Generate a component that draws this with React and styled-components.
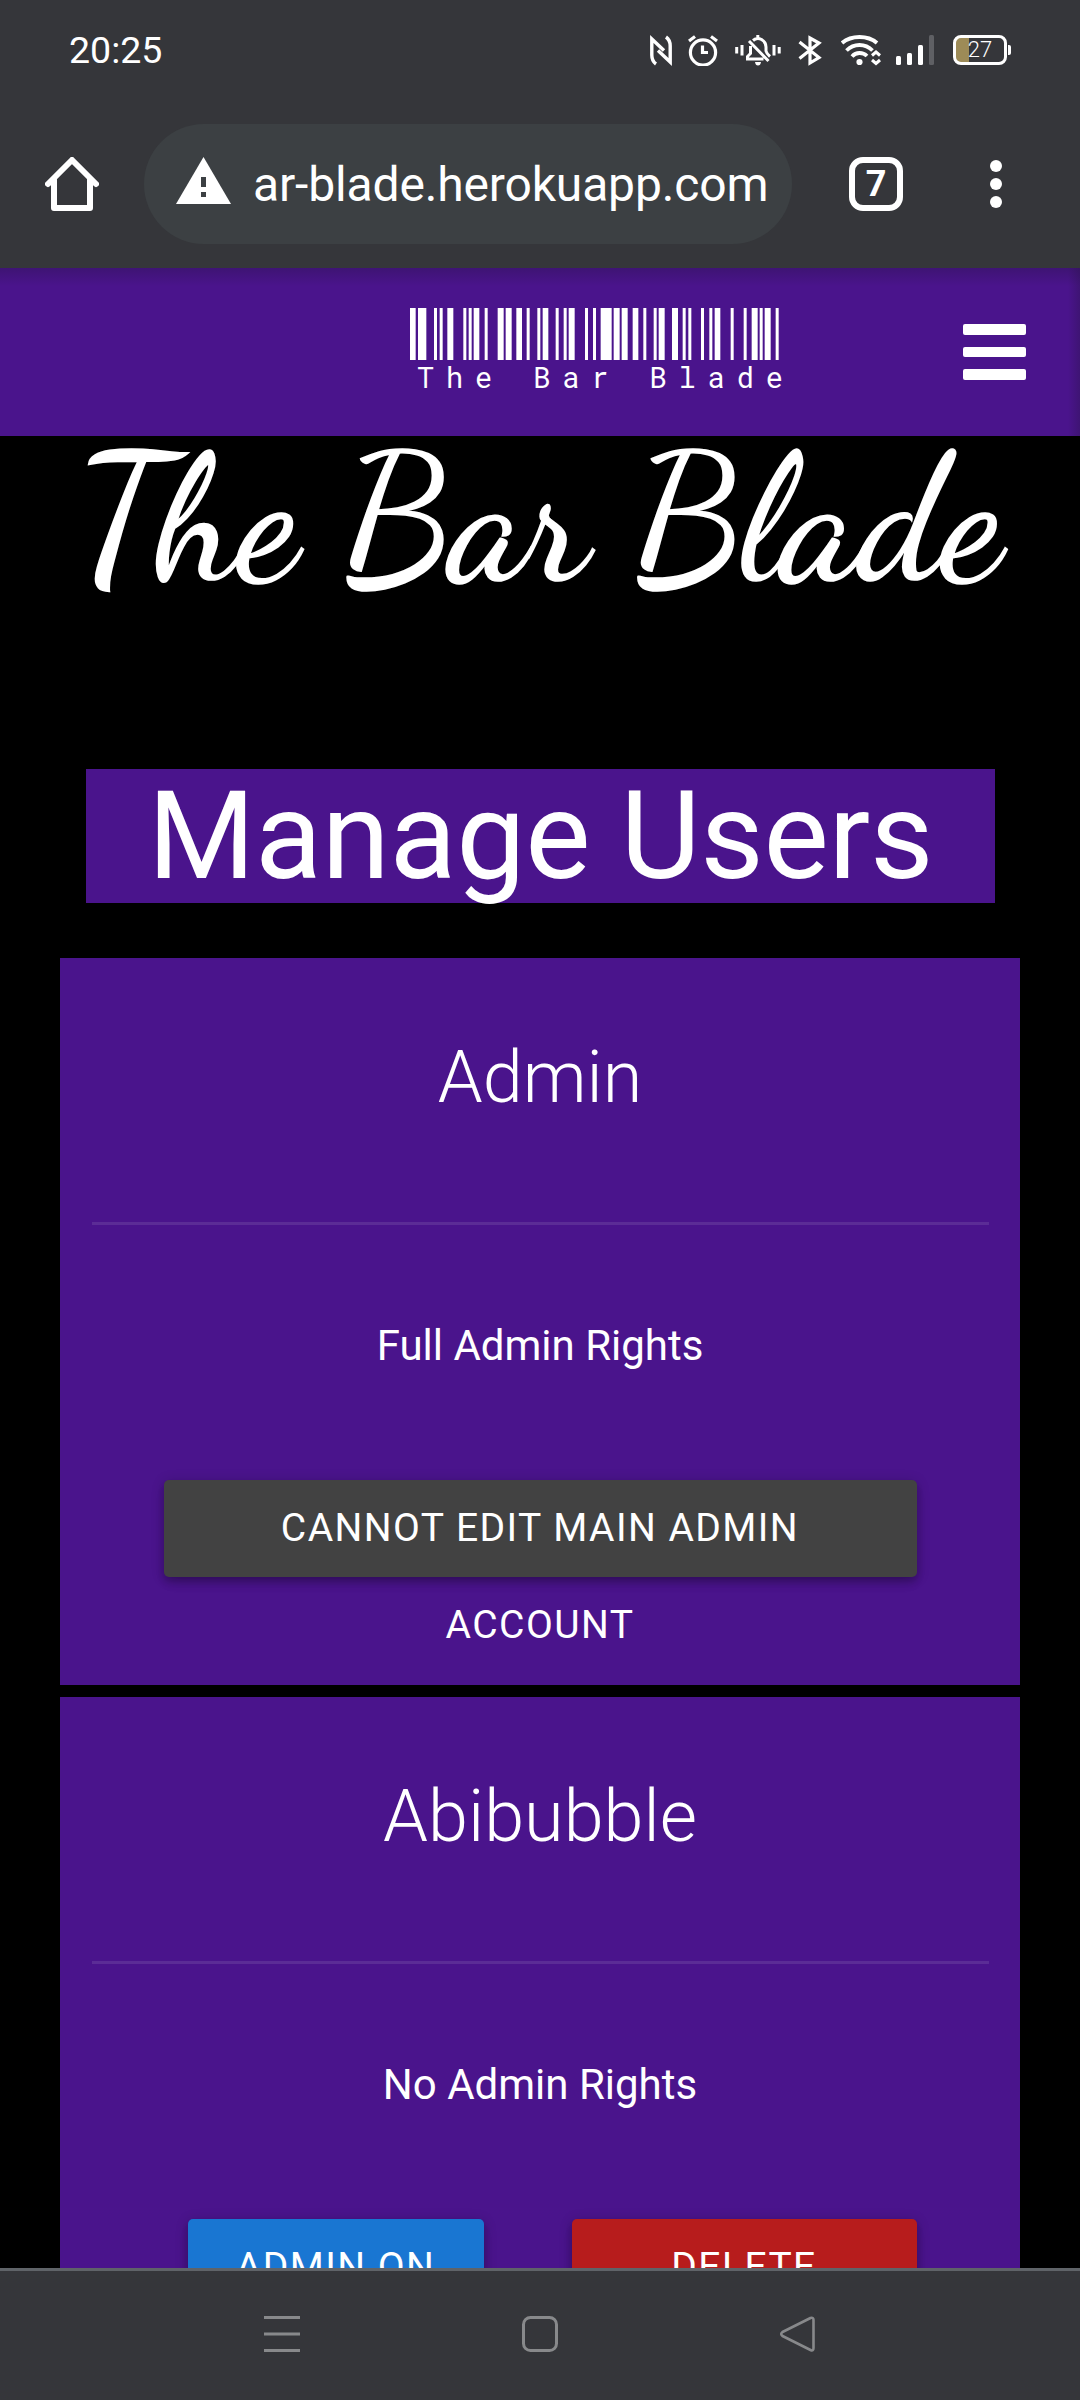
import React from "react";
import styled, { createGlobalStyle } from "styled-components";

const GlobalStyle = createGlobalStyle`
  *, *::before, *::after { box-sizing: border-box; }
  body { margin: 0; background: #000; }
  h1, h2, p { margin: 0; font-weight: 400; }
  svg { display: block; flex: none; }
  button { border: 0; padding: 0; background: none; color: inherit; font: inherit; }
`;

const Phone = styled.div`
  display: flex;
  flex-direction: column;
  width: 1080px;
  height: 2400px;
  overflow: hidden;
  background: #000;
  color: #fff;
  font-family: Roboto, "Liberation Sans", sans-serif;
`;

const StatusBar = styled.div`
  flex: none;
  display: flex;
  justify-content: space-between;
  align-items: flex-start;
  height: 100px;
  padding: 35px 69px 0 69px;
  background: #35363a;
`;

const Clock = styled.span`
  font-size: 37.5px;
  line-height: 31px;
`;

const StatusIcons = styled.div`
  display: flex;
  align-items: flex-start;
`;

const StatusIcon = styled.svg`
  width: ${(p) => p.$w}px;
  height: 31px;
  margin-left: ${(p) => p.$gap || 0}px;
  fill: none;
  stroke: #fff;
  stroke-width: ${(p) => p.$stroke || 3}px;
`;

const Battery = styled.div`
  display: flex;
  align-items: center;
  margin-left: 18px;
`;

const BatteryBody = styled.div`
  display: flex;
  align-items: center;
  justify-content: center;
  width: 54px;
  height: 30px;
  border: 3px solid #fff;
  border-radius: 8px;
  background: linear-gradient(90deg, #9d8b57 13px, transparent 13px);
  font-size: 22px;
  line-height: 24px;
  font-weight: 300;
`;

const BatteryTip = styled.div`
  width: 3px;
  height: 10px;
  margin-left: 1px;
  border-radius: 0 2px 2px 0;
  background: #fff;
`;

const Toolbar = styled.div`
  flex: none;
  display: flex;
  align-items: center;
  height: 168px;
  padding: 0 78px 0 45px;
  background: #35363a;
`;

const AddressBar = styled.div`
  display: flex;
  align-items: center;
  width: 648px;
  height: 120px;
  margin-left: 45px;
  padding-left: 32px;
  border-radius: 60px;
  background: #3c4043;
  white-space: nowrap;
`;

const Url = styled.span`
  margin: 2px 0 0 22px;
  font-size: 48px;
  line-height: 60px;
  letter-spacing: -0.15px;
`;

const TabCount = styled.div`
  display: flex;
  align-items: center;
  justify-content: center;
  width: 54px;
  height: 54px;
  margin-left: 57px;
  border: 6px solid #fff;
  border-radius: 14px;
  font-size: 36px;
  font-weight: 700;
  line-height: 42px;
`;

const Overflow = styled.div`
  display: flex;
  flex-direction: column;
  gap: 6px;
  margin-left: 87px;
`;

const Dot = styled.i`
  width: 12px;
  height: 12px;
  border-radius: 50%;
  background: #fff;
`;

const Navbar = styled.nav`
  flex: none;
  display: flex;
  align-items: flex-start;
  justify-content: space-between;
  height: 168px;
  padding: 40px 54px 0 410px;
  background:
    linear-gradient(180deg, rgba(40, 20, 70, 0.35), transparent 18px),
    linear-gradient(270deg, rgba(40, 20, 70, 0.35), transparent 12px),
    #4a148c;
`;

const Brand = styled.div`
  display: flex;
  flex-direction: column;
  width: 380px;
`;

const BrandText = styled.span`
  margin: 0 0 0 7px;
  font-family: "Roboto Mono", "DejaVu Sans Mono", monospace;
  font-weight: 400;
  font-size: 28.6px;
  line-height: 35px;
  letter-spacing: 11.9px;
  white-space: nowrap;
`;

const Burger = styled.button`
  display: flex;
  flex-direction: column;
  gap: 12px;
  width: 63px;
  margin-top: 16px;
`;

const BurgerLine = styled.span`
  width: 63px;
  height: 10.6px;
  border-radius: 2px;
  background: #fff;
`;

const Page = styled.main`
  flex: 1;
  min-height: 0;
  display: flex;
  flex-direction: column;
  overflow: hidden;
`;

const Hero = styled.div`
  flex: none;
  display: flex;
  justify-content: center;
  height: 333px;
`;

const SiteTitle = styled.h1`
  margin-left: -2px;
  font-family: "Dancing Script", "Liberation Serif", cursive;
  font-size: 176px;
  line-height: 167px;
  white-space: nowrap;
  -webkit-text-stroke: 1.6px #fff;
`;

const PageTitle = styled.h2`
  flex: none;
  width: 909px;
  height: 134px;
  margin-left: 86px;
  background: #4a148c;
  font-size: 123.2px;
  line-height: 134px;
  letter-spacing: -0.25px;
  text-align: center;
  white-space: nowrap;
`;

const CardList = styled.div`
  display: flex;
  flex-direction: column;
  gap: 12px;
  width: 960px;
  margin: 55px 0 0 60px;
`;

const Card = styled.section`
  flex: none;
  display: flex;
  flex-direction: column;
  height: 727px;
  padding: 80px 31px 0 32px;
  background: #4a148c;
  text-align: center;
`;

const UserName = styled.h2`
  margin-right: 1px;
  font-size: 72px;
  font-weight: 300;
  line-height: 80px;
`;

const Divider = styled.div`
  height: 3px;
  margin-top: 104px;
  background: #5b2c96;
`;

const Rights = styled.p`
  margin: 90px 1px 0 0;
  font-size: 42px;
  line-height: 62px;
`;

const Actions = styled.div`
  display: flex;
  gap: 88px;
  margin: 103px 72px 0 ${(p) => p.$indent}px;
`;

const Action = styled.button`
  flex: ${(p) => (p.$width ? "none" : "1")};
  width: ${(p) => (p.$width ? p.$width + "px" : "auto")};
  height: 97px;
  padding: 0 44px;
  border-radius: 5px;
  background: ${(p) => p.$color};
  box-shadow: 0 5px 6px rgba(0, 0, 0, 0.14), 0 8px 14px -5px rgba(0, 0, 0, 0.12),
    0 2px 13px rgba(0, 0, 0, 0.2);
`;

const ActionLabel = styled.span`
  display: block;
  height: 97px;
  margin-left: -1px;
  font-size: 39px;
  line-height: 97px;
  letter-spacing: 1.45px;
  text-transform: uppercase;
`;

const SystemNav = styled.footer`
  flex: none;
  display: flex;
  align-items: flex-start;
  justify-content: space-between;
  height: 132px;
  padding: 45px 264px 0;
  border-top: 3px solid #5f6368;
  background: #35363a;
`;

const bars = [
  [91, 17], [115, 25], [163, 9], [180, 9], [203, 18], [251, 9], [267, 9], [282, 17], [315, 9],
  [354, 18], [378, 18], [410, 17], [441, 9], [473, 9], [489, 17], [528, 9], [552, 9], [567, 18],
  [616, 9], [640, 9], [663, 33], [702, 18], [726, 18], [759, 17], [791, 9], [822, 9], [837, 18],
  [877, 18], [909, 9], [926, 9], [964, 9], [989, 9], [1005, 17], [1053, 9], [1092, 9],
  [1116, 18], [1140, 9], [1155, 18], [1188, 9],
];

const users = [
  {
    name: "Admin",
    rights: "Full Admin Rights",
    indent: 72,
    actions: [{ label: "Cannot edit main admin account", color: "#424242" }],
  },
  {
    name: "Abibubble",
    rights: "No Admin Rights",
    indent: 96,
    actions: [
      { label: "Admin on", color: "#1976d2", width: 296 },
      { label: "Delete", color: "#b71c1c" },
    ],
  },
];

function StatusRow() {
  return (
    <StatusIcons>
      <StatusIcon $w={22} $stroke={3.4} viewBox="0 0 22 31">
        <path d="M6 29Q1.800 26 1.800 20V4L14 15.500M16 2Q20.200 5 20.200 11V27L8 15.500" />
      </StatusIcon>
      <StatusIcon $w={30} $gap={16} $stroke={3.2} viewBox="0 0 30 31">
        <circle cx="15" cy="17.500" r="12.600" />
        <path d="M14.500 10.500V17.500H20M1 6L7 1.500M29 6L23 1.500" />
      </StatusIcon>
      <StatusIcon $w={46} $gap={17} viewBox="0 0 46 31">
        <path d="M1.700 12V18.500M7 10V20.500M39 10V20.500M44.200 12V18.500" />
        <path d="M14 6L33.500 26M11 24H28.500M12.500 24V21.500L15.500 18.500V11M18 5.500Q22 2 26.500 4.500Q31 7 31 12V16Q31.500 18.500 35 21.500M22.800 0V4" />
        <path d="M20 27H26Q25.500 30.500 23 30.500Q20.500 30.500 20 27Z" fill="#fff" stroke="none" />
      </StatusIcon>
      <StatusIcon $w={24} $gap={17} $stroke={3.2} viewBox="0 0 24 31">
        <path d="M1.500 7L21 22.500L12 28V3L21 8L1.500 23.500" />
      </StatusIcon>
      <StatusIcon $w={41} $gap={19} viewBox="0 0 41 31">
        <path d="M1 8Q8 2 18.500 2T36 8M5.500 15.500Q11 10 18.500 10T31.500 15.500M11 21.500Q14 18 18.500 18Q23 18 26 21" strokeWidth="3.800" />
        <circle cx="18.500" cy="27" r="3.100" fill="#fff" stroke="none" />
        <path d="M31 20.500L35 17L39 20.500M31 25L35 28.500L39 25" />
      </StatusIcon>
      <StatusIcon $w={39} $gap={14} viewBox="0 0 39 31">
        <g fill="#fff" stroke="none">
          <rect x="0" y="21" width="5" height="9" rx="1.500" />
          <rect x="11" y="18" width="5" height="12" rx="1.500" />
          <rect x="22" y="10" width="5" height="20" rx="1.500" />
          <rect x="33" y="0" width="5" height="30" rx="1.500" fill="#5f6064" />
        </g>
      </StatusIcon>
      <Battery>
        <BatteryBody>27</BatteryBody>
        <BatteryTip />
      </Battery>
    </StatusIcons>
  );
}

function BrowserToolbar() {
  return (
    <Toolbar>
      <svg width="54" height="54" viewBox="0 0 54 54" fill="none" stroke="#fff" strokeWidth="6" strokeLinecap="round" strokeLinejoin="round">
        <path d="M3 27L27 3L51 27" />
        <path d="M9 23V51H45V23" />
      </svg>
      <AddressBar>
        <svg width="55" height="54" viewBox="0 0 55 54">
          <path d="M27.500 0L55 47H0Z" fill="#fff" />
          <path d="M25 20H30V30H25ZM25 35H30V40H25Z" fill="#3c4043" />
        </svg>
        <Url>ar-blade.herokuapp.com</Url>
      </AddressBar>
      <TabCount>7</TabCount>
      <Overflow>
        <Dot />
        <Dot />
        <Dot />
      </Overflow>
    </Toolbar>
  );
}

function UserCard({ user }) {
  return (
    <Card>
      <UserName>{user.name}</UserName>
      <Divider />
      <Rights>{user.rights}</Rights>
      <Actions $indent={user.indent}>
        {user.actions.map((a) => (
          <Action key={a.label} $color={a.color} $width={a.width}>
            <ActionLabel>{a.label}</ActionLabel>
          </Action>
        ))}
      </Actions>
    </Card>
  );
}

export default function App() {
  return (
    <Phone>
      <GlobalStyle />
      <StatusBar>
        <Clock>20:25</Clock>
        <StatusRow />
      </StatusBar>
      <BrowserToolbar />
      <Navbar>
        <Brand>
          <svg width="369" height="52" viewBox="91 0 1107 156" fill="#fff">
            {bars.map(([x, w]) => (
              <rect key={x} x={x} y="0" width={w} height="156" />
            ))}
          </svg>
          <BrandText>The Bar Blade</BrandText>
        </Brand>
        <Burger aria-label="Menu">
          <BurgerLine />
          <BurgerLine />
          <BurgerLine />
        </Burger>
      </Navbar>
      <Page>
        <Hero>
          <SiteTitle>The Bar Blade</SiteTitle>
        </Hero>
        <PageTitle>Manage Users</PageTitle>
        <CardList>
          {users.map((u) => (
            <UserCard key={u.name} user={u} />
          ))}
        </CardList>
      </Page>
      <SystemNav>
        <svg width="36" height="36" viewBox="0 0 36 36" stroke="#88898b" strokeWidth="3">
          <path d="M0 1.500H36M0 18H36M0 34.500H36" />
        </svg>
        <svg width="36" height="36" viewBox="0 0 36 36" fill="none" stroke="#88898b" strokeWidth="3">
          <rect x="1.500" y="1.500" width="33" height="33" rx="7" />
        </svg>
        <svg width="36" height="36" viewBox="0 0 36 36" fill="none" stroke="#88898b" strokeWidth="2.600" strokeLinejoin="round">
          <path d="M2.500 16L30.500 2Q33.500 1 33.500 4V32Q33.500 35.500 30.500 34L2.500 20Q0 18 2.500 16Z" />
        </svg>
      </SystemNav>
    </Phone>
  );
}
